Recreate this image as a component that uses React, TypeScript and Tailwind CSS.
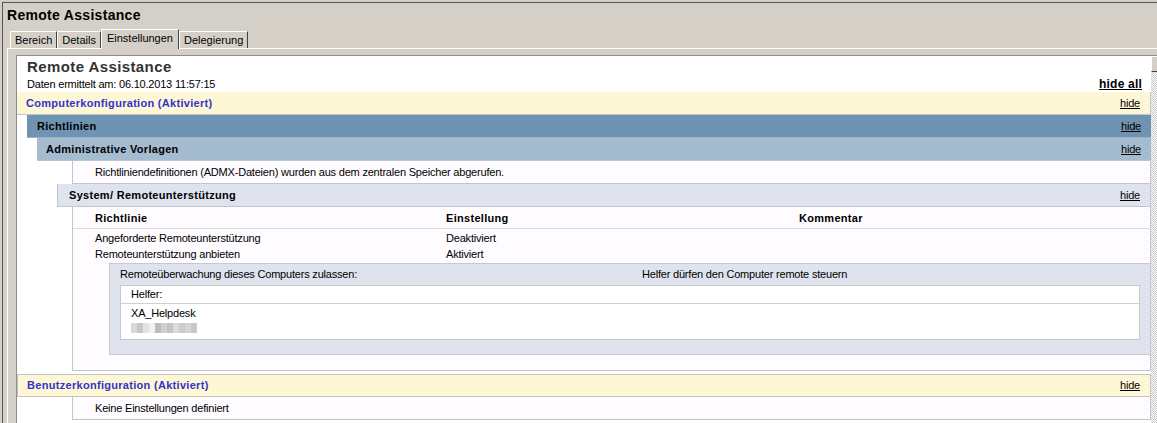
import React from "react";

function HideLink({ bold }: { bold?: boolean }) {
  return (
    <span className={bold ? "font-bold text-[12px] tracking-[0.2px] underline" : "underline"}>
      {bold ? "hide all" : "hide"}
    </span>
  );
}

function SectionRow({
  title,
  className,
  textClass,
}: {
  title: string;
  className: string;
  textClass: string;
}) {
  return (
    <div className={`flex h-[23px] items-center justify-between pr-[10px] ${className}`}>
      <span className={`font-bold tracking-[0.3px] ${textClass}`}>{title}</span>
      <HideLink />
    </div>
  );
}

function Blurred() {
  const blocks = [
    "bg-[#d8d8d8]",
    "bg-[#c8c8c8]",
    "bg-[#e4e4e4]",
    "bg-[#f0f0f0]",
    "bg-[#bcbcbc]",
    "bg-[#d0d0d0]",
    "bg-[#c4c4c4]",
    "bg-[#dcdcdc]",
    "bg-[#cccccc]",
    "bg-[#d4d4d4]",
    "bg-[#c8c8c8]",
  ];
  return (
    <div className="flex h-[12px] items-start">
      {blocks.map((c, i) => (
        <div key={i} className={`h-[10px] w-[6px] ${c}`} />
      ))}
    </div>
  );
}

export default function App() {
  return (
    <div className="h-[423px] w-[1157px] overflow-hidden bg-[#d4d0c8] font-['Liberation_Sans',Arial,sans-serif] text-[11px] tracking-[-0.2px] text-black">
      <div className="ml-[2px] mt-[2px] h-full border-l border-t border-[#555555]">
        <div className="pl-[4px] pt-[4px] text-[14px] font-bold leading-[17px] tracking-[0.3px]">Remote Assistance</div>

        {/* tabs */}
        <div className="relative z-10 ml-[7px] mt-[5px] flex items-end tracking-normal">
          {["Bereich", "Details"].map((t) => (
            <div
              key={t}
              className="flex h-[17px] items-center border-l border-t border-r border-l-white border-t-white border-r-[#404040] px-[4px]"
            >
              {t}
            </div>
          ))}
          <div className="-mb-px flex h-[20px] items-center border-l border-t border-r border-l-white border-t-white border-r-[#404040] bg-[#d4d0c8] px-[5px] pb-[2px]">
            Einstellungen
          </div>
          <div className="flex h-[17px] items-center border-l border-t border-r border-l-white border-t-white border-r-[#404040] px-[4px]">
            Delegierung
          </div>
        </div>

        {/* tab panel */}
        <div className="ml-[4px] h-full border-l border-t border-white pl-[8px] pt-[6px]">
          <div className="flex h-full border-l border-t border-[#8c8c8c]">
            <div className="w-[1134px] shrink-0 bg-white pt-[1px]">
              <div className="pl-[10px] text-[15px] font-bold leading-[19px] tracking-[0.4px] text-[#333333]">Remote Assistance</div>
              <div className="flex h-[16px] items-center justify-between pl-[10px] pr-[9px] leading-[16px]">
                <span>Daten ermittelt am: 06.10.2013 11:57:15</span>
                <HideLink bold />
              </div>

              <SectionRow
                title="Computerkonfiguration (Aktiviert)"
                className="border-b border-r border-[#c4c4c4] bg-[#fef7d6] pl-[9px]"
                textClass="text-[#3333cc]"
              />
              <div className="ml-[10px]">
                <SectionRow
                  title="Richtlinien"
                  className="border-b border-[#a0b0c0] bg-[#6f93b3] pl-[10px]"
                  textClass=""
                />
                <div className="ml-[10px]">
                  <SectionRow
                    title="Administrative Vorlagen"
                    className="border-b border-[#b8c4d0] bg-[#a5bbd0] pl-[9px]"
                    textClass=""
                  />
                  <div className="ml-[35px] flex h-[23px] items-center border-b border-l border-r border-[#c4c4cc] bg-[#fefcff] pl-[22px]">
                    Richtliniendefinitionen (ADMX-Dateien) wurden aus dem zentralen Speicher abgerufen.
                  </div>
                  <div className="ml-[20px]">
                    <SectionRow
                      title="System/ Remoteunterstützung"
                      className="border-b border-l border-r border-[#c4c4cc] bg-[#dfe3ee] pl-[11px]"
                      textClass=""
                    />
                    <div className="ml-[15px] border-b border-l border-r border-[#c4c4cc] bg-[#fefcff] pb-[15px]">
                      <div className="grid h-[22px] grid-cols-[351px_353px_1fr] items-center border-b border-[#dcdce0] pl-[22px] pt-[2px] font-bold tracking-[0.3px]">
                        <span>Richtlinie</span>
                        <span>Einstellung</span>
                        <span>Kommentar</span>
                      </div>
                      <div className="pb-[1px] pt-[1px]">
                        <div className="grid h-[16px] grid-cols-[351px_353px_1fr] items-center pl-[22px]">
                          <span>Angeforderte Remoteunterstützung</span>
                          <span>Deaktiviert</span>
                          <span />
                        </div>
                        <div className="grid h-[16px] grid-cols-[351px_353px_1fr] items-center pl-[22px]">
                          <span>Remoteunterstützung anbieten</span>
                          <span>Aktiviert</span>
                          <span />
                        </div>
                      </div>
                      <div className="ml-[36px] border-l border-t border-b border-[#c8c8d0] bg-[#dfe3ee] pb-[14px]">
                        <div className="grid h-[21px] grid-cols-[522px_1fr] items-center pl-[10px]">
                          <span>Remoteüberwachung dieses Computers zulassen:</span>
                          <span>Helfer dürfen den Computer remote steuern</span>
                        </div>
                        <div className="mx-[10px] border border-[#c8c8c8] bg-white">
                          <div className="flex h-[18px] items-center border-b border-[#d0d0d0] pl-[10px]">Helfer:</div>
                          <div className="pb-[4px] pl-[10px] pt-[1px]">
                            <div className="flex h-[16px] items-center">XA_Helpdesk</div>
                            <div className="pt-[2px]">
                              <Blurred />
                            </div>
                          </div>
                        </div>
                      </div>
                    </div>
                  </div>
                </div>
              </div>

              <div className="mt-[3px]">
                <SectionRow
                  title="Benutzerkonfiguration (Aktiviert)"
                  className="border border-[#c4c4c4] bg-[#fef7d6] pl-[9px]"
                  textClass="text-[#3333cc]"
                />
                <div className="ml-[55px] flex h-[23px] items-center border-b border-l border-r border-[#c4c4cc] bg-[#fefcff] pl-[22px]">
                  Keine Einstellungen definiert
                </div>
              </div>
            </div>

            {/* scrollbar */}
            <div className="w-[17px] shrink-0 bg-[repeating-conic-gradient(#c8c8c8_0_25%,#ffffff_0_50%)] bg-[length:2px_2px]">
              <div className="h-[16px] border border-l-white border-t-white border-r-[#404040] border-b-[#404040] bg-[#d4d0c8]" />
            </div>
          </div>
        </div>
      </div>
    </div>
  );
}
